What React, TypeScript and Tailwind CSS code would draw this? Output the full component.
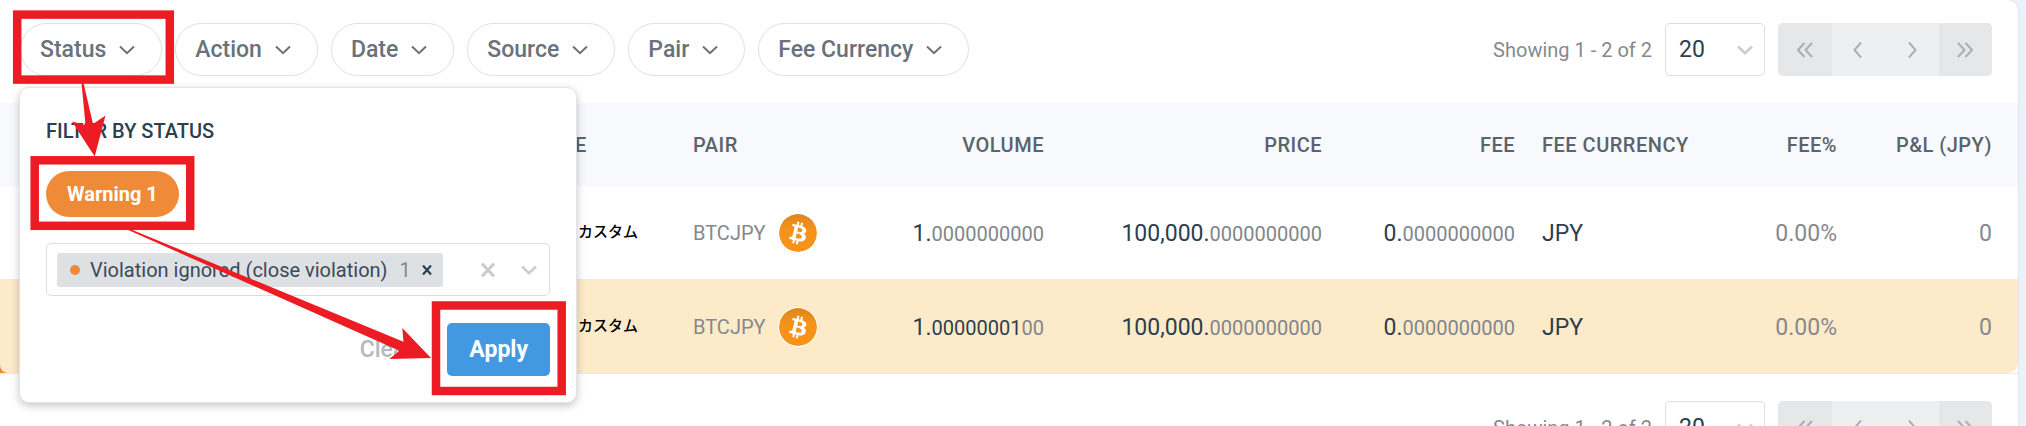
import React from "react";

const CHIPS = ["Status", "Action", "Date", "Source", "Pair", "Fee Currency"];

function Chevron({ className }: { className: string }) {
  return (
    <svg viewBox="0 0 16 10" fill="none" stroke="currentColor" className={className} aria-hidden="true">
      <path d="M1 1.5 8 8.2 15 1.5" />
    </svg>
  );
}

function Coin() {
  return (
    <svg
      viewBox="0 0 38 38"
      className="size-[38px] shrink-0 rounded-full shadow-[0_0_0_1px_rgba(255,255,255,0.8)]"
      aria-hidden="true"
    >
      <defs>
        <linearGradient id="coin" x1="0" y1="0" x2="0" y2="1">
          <stop offset="0" stopColor="#dd871c" />
          <stop offset="0.45" stopColor="#f7931a" />
        </linearGradient>
      </defs>
      <circle cx="19" cy="19" r="19" fill="url(#coin)" />
      <g transform="translate(0.6 0.6) scale(1.15)">
        <path
          fill="#fff"
          d="M23.189 14.02c.314-2.096-1.283-3.223-3.465-3.975l.708-2.84-1.728-.43-.69 2.765c-.454-.114-.92-.22-1.385-.326l.695-2.783L15.596 6l-.708 2.839c-.376-.086-.746-.17-1.104-.26l.002-.009-2.384-.595-.46 1.846s1.283.294 1.256.312c.7.175.826.638.805 1.006l-.806 3.235c.048.012.11.03.18.057l-.183-.045-1.13 4.532c-.086.212-.303.531-.793.41.018.025-1.256-.313-1.256-.313l-.858 1.978 2.25.561c.418.105.828.215 1.231.318l-.715 2.872 1.727.43.708-2.84c.472.127.93.245 1.378.357l-.706 2.828 1.728.43.715-2.866c2.948.558 5.164.333 6.097-2.333.752-2.146-.037-3.385-1.588-4.192 1.13-.26 1.98-1.003 2.207-2.538zm-3.95 5.538c-.533 2.147-4.148.986-5.32.695l.95-3.805c1.172.293 4.929.872 4.37 3.11zm.535-5.569c-.487 1.953-3.495.96-4.47.717l.86-3.45c.975.243 4.118.696 3.61 2.733z"
        />
      </g>
    </svg>
  );
}

function PageButton({ label, d, edge }: { label: string; d: string; edge?: boolean }) {
  return (
    <button
      type="button"
      aria-label={label}
      className={edge ? "grid place-items-center bg-[#e6e7e9]" : "grid place-items-center"}
    >
      <svg viewBox="0 0 16 16" fill="none" stroke="#a9afb4" strokeWidth="2" className="size-4">
        <path d={d} />
      </svg>
    </button>
  );
}

function Pager({ id }: { id: string }) {
  return (
    <div className="ml-auto flex items-center">
      <label htmlFor={id} className="mr-[13px] text-[20px] text-[#85898e]">
        Showing 1 - 2 of 2
      </label>
      <div className="grid h-[53px] w-[100px]">
        <select
          id={id}
          defaultValue="20"
          className="col-start-1 row-start-1 appearance-none rounded-[5px] border border-[#dcdddf] bg-white pt-[2px] pl-[13px] text-[23px] text-[#2c3e50]"
        >
          <option>20</option>
          <option>50</option>
        </select>
        <Chevron className="pointer-events-none col-start-1 row-start-1 mr-3 h-[10px] w-4 self-center justify-self-end stroke-[2.5] text-[#cccccc]" />
      </div>
      <div className="ml-[13px] grid h-[53px] w-[214px] grid-cols-4 overflow-hidden rounded-[5px] bg-[#eeeff1]">
        <PageButton edge label="First page" d="M7.5 1 1 8l6.5 7M15 1 8.5 8 15 15" />
        <PageButton label="Previous page" d="M11 .5 4.5 8l6.5 7.5" />
        <PageButton label="Next page" d="M5 .5 11.5 8 5 15.5" />
        <PageButton edge label="Last page" d="M1 1l6.5 7L1 15M8.5 1 15 8l-6.500 7" />
      </div>
    </div>
  );
}

function Amount({ whole, digits, rest }: { whole: string; digits?: string; rest: string }) {
  return (
    <span className="text-[23px] text-[#2c3e50]">
      {whole}
      <span className="text-[20px]">{digits}</span>
      <span className="text-[20px] text-[#80868c]">{rest}</span>
    </span>
  );
}

const ROWS = [
  { digits: "", rest: "0000000000", warning: false },
  { digits: "00000001", rest: "00", warning: true },
];

function StatusPanel() {
  return (
    <section className="absolute top-[87px] left-[19px] w-[558px] rounded-[10px] border border-[#e3e4e6] bg-white px-[26px] pt-[29px] pb-[26px] shadow-[0_3px_8px_rgba(0,0,0,0.22)]">
      <h2 className="text-[20px] leading-7 font-medium text-[#2c3e50]">FILTER BY STATUS</h2>
      <button
        type="button"
        className="mt-[26px] block h-[46px] rounded-full bg-[#ee8a38] px-[21px] text-[20px] font-bold text-white"
      >
        Warning 1
      </button>
      <div className="mt-[26px] flex h-[53px] items-center rounded-[5px] border border-[#dcdddf] px-[10px]">
        <span className="flex h-[34px] items-center rounded-[3px] bg-[#dde1e4] pl-[13px] text-[20px] text-[#3b4a5a]">
          <span className="mr-[10px] size-[10px] rounded-full bg-[#ee8a38]" />
          Violation ignored (close violation)
          <span className="ml-3 text-[#85898e]">1</span>
          <button type="button" aria-label="Remove" className="grid h-full w-8 place-items-center">
            <svg viewBox="0 0 10 10" className="size-[10px]" fill="none" stroke="#2c3e50" strokeWidth="2.2">
              <path d="M1 .5 9 9.5M9 .5 1 9.5" />
            </svg>
          </button>
        </span>
        <button type="button" aria-label="Clear selection" className="ml-auto">
          <svg viewBox="0 0 14 14" className="size-[14px]" fill="none" stroke="#ccc" strokeWidth="3">
            <path d="M1 .5 13 13.5M13 .5 1 13.5" />
          </svg>
        </button>
        <button type="button" aria-label="Open list" className="mr-[2px] ml-[26px]">
          <Chevron className="h-[10px] w-4 stroke-[2.5] text-[#cccccc]" />
        </button>
      </div>
      <div className="mt-[27px] flex items-center justify-end gap-[34px]">
        <button type="button" className="pt-[2px] text-[23px] font-medium text-[#b4b9bd]">
          Clear
        </button>
        <button
          type="button"
          className="h-[53px] rounded-[5px] bg-[#4299e1] px-[22px] pt-[2px] text-[23px] font-bold text-white"
        >
          Apply
        </button>
      </div>
    </section>
  );
}

function Walkthrough() {
  return (
    <svg
      viewBox="0 0 600 426"
      className="pointer-events-none absolute top-0 left-0 h-[426px] w-[600px]"
      aria-hidden="true"
    >
      <g fill="none" stroke="#ed1c24" strokeWidth="8.5">
        <rect x="17.2" y="14.6" width="152.6" height="65" />
        <rect x="34.7" y="160.3" width="155.5" height="65.5" />
        <rect x="436" y="305.5" width="125.7" height="85.5" />
      </g>
      <g fill="#ed1c24">
        <path d="M81.5 83 83.5 83 93 124 105.5 115.5 94.7 156.5 72 121.5 85.5 125Z" />
        <path d="M126 229 130 229 403.5 341.7 402.3 328 431 358 389.3 359 399.3 350.7Z" />
      </g>
    </svg>
  );
}

export default function App() {
  return (
    <div className="h-screen overflow-hidden bg-[#edf1fa] pr-2 font-[Roboto,'Noto_Sans_CJK_JP',sans-serif]">
      <main className="relative min-h-full rounded-tr-[10px] bg-white shadow-[0_0_2px_rgba(0,0,0,0.15)]">
        <header className="flex items-center gap-[13px] pt-[23px] pr-[26px] pb-[27px] pl-5">
          {CHIPS.map((label) => (
            <button
              key={label}
              type="button"
              className="flex h-[53px] items-center gap-[13px] rounded-full border border-[#dfe0e2] pr-[26px] pl-[19px] text-[23px] font-medium text-[#69727b]"
            >
              <span className="pt-px">{label}</span>
              <Chevron className="h-[10px] w-4 stroke-2" />
            </button>
          ))}
          <Pager id="rows-top" />
        </header>

        <table className="w-full table-fixed border-separate border-spacing-0">
          <colgroup>
            <col className="w-[495px]" />
            <col className="w-[185px]" />
            <col className="w-[180px]" />
            <col className="w-[197px]" />
            <col className="w-[278px]" />
            <col className="w-[193px]" />
            <col className="w-[200px]" />
            <col className="w-[122px]" />
            <col />
          </colgroup>
          <thead>
            <tr className="h-[83px] bg-[#f7f9fd] text-[20px] tracking-wide text-[#5b636b]">
              <th aria-label="Status" />
              <th className="px-[13px] text-left font-medium">SOURCE</th>
              <th className="px-[13px] text-left font-medium">PAIR</th>
              <th className="px-[13px] text-right font-medium">VOLUME</th>
              <th className="px-[13px] text-right font-medium">PRICE</th>
              <th className="px-[13px] text-right font-medium">FEE</th>
              <th className="px-[14px] text-left font-medium">FEE CURRENCY</th>
              <th className="px-[13px] text-right font-medium">FEE%</th>
              <th className="pr-[26px] text-right font-medium">P&amp;L (JPY)</th>
            </tr>
          </thead>
          <tbody>
            {ROWS.map((row) => {
              const tint = row.warning ? "bg-[#fdeac8]" : "";
              return (
                <tr key={row.rest} className="h-[94px] *:border-b *:border-[#e8eaec]">
                  <td className={row.warning ? "bg-[#ee8a38] p-0" : "p-0"}>
                    <div className={`h-[93px] rounded-bl-[8px] ${tint}`} />
                  </td>
                  <td className={`pl-[83px] text-[15px] font-medium text-black ${tint}`}>カスタム</td>
                  <td className={`px-[13px] ${tint}`}>
                    <span className="flex items-center gap-[13px] text-[20px] text-[#85898e]">
                      BTCJPY
                      <Coin />
                    </span>
                  </td>
                  <td className={`px-[13px] pt-1 text-right ${tint}`}>
                    <Amount whole="1." digits={row.digits} rest={row.rest} />
                  </td>
                  <td className={`px-[13px] pt-1 text-right ${tint}`}>
                    <Amount whole="100,000." rest="0000000000" />
                  </td>
                  <td className={`px-[13px] pt-1 text-right ${tint}`}>
                    <Amount whole="0." rest="0000000000" />
                  </td>
                  <td className={`px-[14px] pt-1 text-[23px] text-[#2c3e50] ${tint}`}>JPY</td>
                  <td className={`px-[13px] pt-1 text-right text-[23px] text-[#85898e] ${tint}`}>0.00%</td>
                  <td className="p-0 text-[23px] text-[#85898e]">
                    <div className={`flex h-[93px] items-center justify-end rounded-br-[10px] pt-1 pr-[26px] ${tint}`}>
                      0
                    </div>
                  </td>
                </tr>
              );
            })}
          </tbody>
        </table>

        <footer className="flex pt-[27px] pr-[26px]">
          <Pager id="rows-bottom" />
        </footer>

        <StatusPanel />
        <Walkthrough />
      </main>
    </div>
  );
}
